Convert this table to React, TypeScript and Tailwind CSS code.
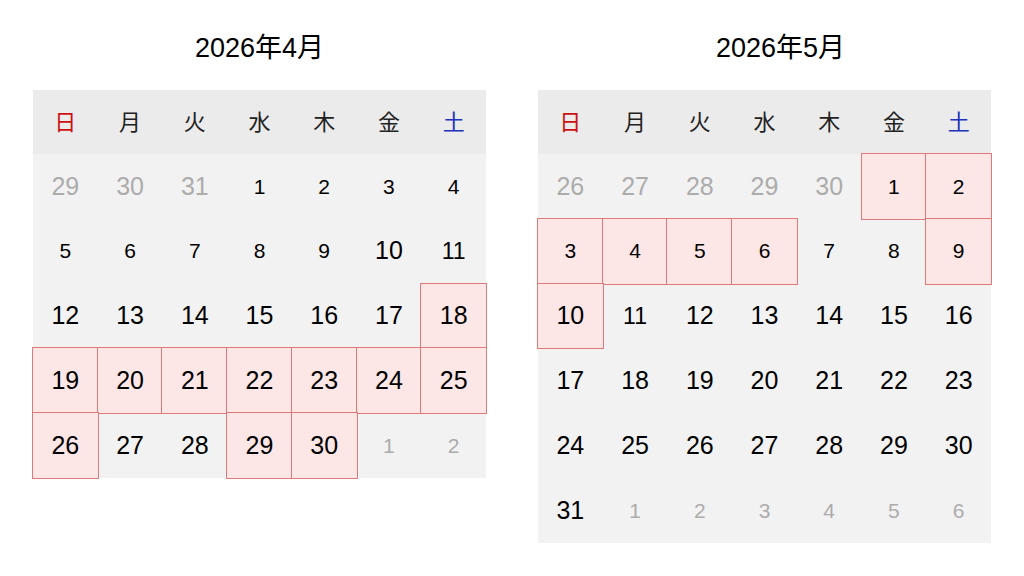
import React from "react";

type Day = { n: number; muted?: boolean; hit?: boolean };

const WEEK = ["日", "月", "火", "水", "木", "金", "土"];

function days(lead: number[], count: number, trail: number, hits: number[]): Day[] {
  const out: Day[] = lead.map((n) => ({ n, muted: true }));
  for (let i = 1; i <= count; i++) out.push({ n: i, hit: hits.includes(i) });
  for (let i = 1; i <= trail; i++) out.push({ n: i, muted: true });
  return out;
}

const april = days([29, 30, 31], 30, 2, [18, 19, 20, 21, 22, 23, 24, 25, 26, 29, 30]);
const may = days([26, 27, 28, 29, 30], 31, 6, [1, 2, 3, 4, 5, 6, 9, 10]);

function Calendar({ title, items, shift }: { title: string; items: Day[]; shift?: boolean }) {
  return (
    <div className="w-[453px]">
      <div className={`flex h-[90px] items-center justify-center pt-[6px] text-[27px] text-black ${shift ? "pl-[32px]" : ""}`}>{title}</div>
      <div className="grid h-[64px] grid-cols-7 items-center bg-[#ebebeb] text-[22px]">
        {WEEK.map((w, i) => (
          <div key={w} className={`text-center ${i === 0 ? "text-[#cc1111]" : i === 6 ? "text-[#2233bb]" : "text-[#222]"}`}>{w}</div>
        ))}
      </div>
      <div className="grid grid-cols-7 bg-[#f2f2f2]">
        {items.map((d, i) => (
          <div key={i}
            className={`flex h-[64.8px] items-center justify-center ${d.hit ? "bg-[#fde6e6] outline outline-1 -outline-offset-[0.5px] outline-[#e07a7a]" : ""} ${d.muted ? "text-[#acacac]" : "text-black"} ${d.n < 10 ? "text-[21px]" : d.n === 11 ? "text-[23px]" : "text-[25px]"}`}>
            {d.n}
          </div>
        ))}
      </div>
    </div>
  );
}

export default function App() {
  return (
    <div className="flex h-[576px] w-[1024px] gap-[52px] bg-white pl-[33px]" style={{ fontFamily: '"Liberation Sans", "Noto Sans CJK JP", sans-serif' }}>
      <Calendar title="2026年4月" items={april} />
      <Calendar title="2026年5月" items={may} shift />
    </div>
  );
}
